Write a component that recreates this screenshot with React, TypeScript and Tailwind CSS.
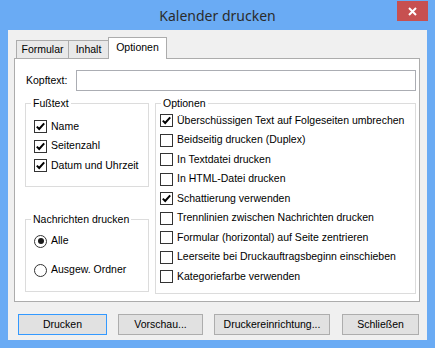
import React from 'react';

const uiFont = { fontFamily: '"Liberation Sans", Arial, sans-serif' };

const options = [
  { label: 'Überschüssigen Text auf Folgeseiten umbrechen', checked: true },
  { label: 'Beidseitig drucken (Duplex)', checked: false },
  { label: 'In Textdatei drucken', checked: false },
  { label: 'In HTML-Datei drucken', checked: false },
  { label: 'Schattierung verwenden', checked: true },
  { label: 'Trennlinien zwischen Nachrichten drucken', checked: false },
  { label: 'Formular (horizontal) auf Seite zentrieren', checked: false },
  { label: 'Leerseite bei Druckauftragsbeginn einschieben', checked: false },
  { label: 'Kategoriefarbe verwenden', checked: false },
];

const footer = ['Name', 'Seitenzahl', 'Datum und Uhrzeit'];

const CheckBox = ({ checked }: { checked: boolean }) => (
  <span className="flex h-[13px] w-[13px] shrink-0 items-center justify-center border border-[#333333] bg-white">
    {checked && (
      <svg width="11" height="11" viewBox="0 0 11 11">
        <path d="M1.8 5.6 L4.2 8 L9.2 2.4" fill="none" stroke="#000" strokeWidth="2" />
      </svg>
    )}
  </span>
);

const Radio = ({ checked }: { checked: boolean }) => (
  <span className="flex h-[13px] w-[13px] shrink-0 items-center justify-center rounded-full border border-[#333333] bg-white">
    {checked && <span className="h-[6px] w-[6px] rounded-full bg-[#1a1a1a]" />}
  </span>
);

const Button = ({ label, width, primary }: { label: string; width: string; primary?: boolean }) => (
  <div
    className={`flex h-[21px] items-center justify-center border bg-[#e1e1e1] text-[10.5px] text-black ${width} ${
      primary ? 'border-[#3399ff]' : 'border-[#adadad]'
    }`}
  >
    {label}
  </div>
);

export default function App() {
  return (
    <div className="flex h-[348px] w-[435px] flex-col bg-[#6aabf4]" style={uiFont}>
      {/* title bar */}
      <div className="relative flex h-[30px] items-center justify-center">
        <span className="text-[14px] text-[#2b2b2b]" style={{ fontFamily: '"Noto Sans", sans-serif' }}>
          Kalender drucken
        </span>
        <div className="absolute right-[7px] top-[1px] flex h-[20px] w-[31px] items-center justify-center bg-[#c75050]">
          <svg width="9" height="9" viewBox="0 0 9 9">
            <path d="M1 1 L8 8 M8 1 L1 8" stroke="#fff" strokeWidth="2" />
          </svg>
        </div>
      </div>

      {/* client area */}
      <div className="mx-[8px] flex h-[310px] flex-col bg-[#f0f0f0] pl-[6px] pr-[8px] pt-[7px]">
        {/* tabs */}
        <div className="flex h-[21px] items-end pl-[2px] text-[10.5px] text-black">
          <div className="flex h-[18px] w-[53px] items-center justify-center border border-b-0 border-[#acacac] bg-[#e9e9e9]">
            Formular
          </div>
          <div className="flex h-[18px] w-[40px] items-center justify-center border border-b-0 border-l-0 border-[#acacac] bg-[#e9e9e9]">
            Inhalt
          </div>
          <div className="relative z-10 -mb-[1px] -ml-[1px] flex h-[22px] w-[59px] items-center justify-center border border-b-0 border-[#acacac] bg-white pb-[2px]">
            Optionen
          </div>
        </div>

        {/* panel */}
        <div className="flex h-[244px] w-[406px] flex-col border border-[#acacac] bg-white pl-[10px] pr-[3px] pt-[11px] text-[10.5px] text-black">
          <div className="flex h-[21px] items-center">
            <span className="w-[51px] pl-[1px]">Kopftext:</span>
            <div className="h-[21px] w-[341px] border border-[#abadb3] bg-white" />
          </div>

          <div className="mt-[6px] flex gap-[6px]">
            <div className="flex w-[124px] flex-col">
              <fieldset className="h-[90px] border border-[#dcdcdc] pl-[8px] pt-[7px]">
                <legend className="-ml-[3px] px-[2px] leading-[13px]">Fußtext</legend>
                {footer.map((f) => (
                  <div key={f} className="flex h-[19.5px] items-center gap-[4px]">
                    <CheckBox checked />
                    <span>{f}</span>
                  </div>
                ))}
              </fieldset>

              <fieldset className="mt-[25.5px] h-[79px] border border-[#dcdcdc] pl-[8px] pt-[6px]">
                <legend className="-ml-[3px] px-[2px] leading-[13px]">Nachrichten drucken</legend>
                <div className="flex h-[19.5px] items-center gap-[4px]">
                  <Radio checked />
                  <span>Alle</span>
                </div>
                <div className="mt-[9.5px] flex h-[19.5px] items-center gap-[4px]">
                  <Radio checked={false} />
                  <span>Ausgew. Ordner</span>
                </div>
              </fieldset>
            </div>

            <fieldset className="h-[197px] w-[261px] border border-[#dcdcdc] pl-[4px] pt-[1px]">
              <legend className="ml-[1px] px-[2px] leading-[13px]">Optionen</legend>
              {options.map((o) => (
                <div key={o.label} className="flex h-[19.5px] items-center gap-[4px]">
                  <CheckBox checked={o.checked} />
                  <span>{o.label}</span>
                </div>
              ))}
            </fieldset>
          </div>
        </div>

        {/* buttons */}
        <div className="mt-[12px] flex pl-[4px]">
          <Button label="Drucken" width="w-[94px]" primary />
          <div className="ml-[11px]">
            <Button label="Vorschau..." width="w-[85px]" />
          </div>
          <div className="ml-[11px]">
            <Button label="Druckereinrichtung..." width="w-[116px]" />
          </div>
          <div className="ml-[12px]">
            <Button label="Schließen" width="w-[77px]" />
          </div>
        </div>
      </div>
    </div>
  );
}
